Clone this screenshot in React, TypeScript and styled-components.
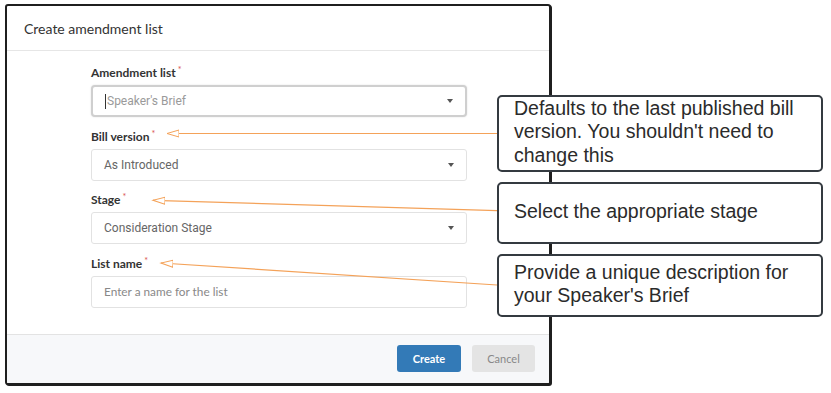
import styled, { createGlobalStyle } from "styled-components";

const GlobalStyle = createGlobalStyle`
  html, body {
    margin: 0;
    padding: 0;
    background: #ffffff;
  }
  body {
    font-family: Lato, "Open Sans", sans-serif;
  }
`;

type Field = {
  label: string;
  value: string;
  kind: "select" | "text";
  focused?: boolean;
};

const fields: Field[] = [
  { label: "Amendment list", value: "Speaker's Brief", kind: "select", focused: true },
  { label: "Bill version", value: "As Introduced", kind: "select" },
  { label: "Stage", value: "Consideration Stage", kind: "select" },
  { label: "List name", value: "Enter a name for the list", kind: "text" },
];

const notes = [
  { height: 77, text: "Defaults to the last published bill version. You shouldn't need to change this" },
  { height: 62, text: "Select the appropriate stage" },
  { height: 63, text: "Provide a unique description for your Speaker's Brief" },
];

// pointer lines: from callout edge to the label they explain
const pointers = [
  { x1: 497, y1: 133.5, x2: 167, y2: 133.5 },
  { x1: 497, y1: 210.7, x2: 153, y2: 200.3 },
  { x1: 497, y1: 285, x2: 161, y2: 263 },
];

const App = () => {
  return (
    <Page>
      <GlobalStyle />
      <Dialog>
        <Header>Create amendment list</Header>
        <Body>
          {fields.map((f) => (
            <FieldGroup key={f.label}>
              <Label>
                {f.label}
                <Req>*</Req>
              </Label>
              <Control $focused={f.focused}>
                {f.kind === "select" ? (
                  <>
                    <SelectValue $muted={f.focused}>
                      {f.focused && <TextCursor />}
                      {f.value}
                    </SelectValue>
                    <Caret />
                  </>
                ) : (
                  <Placeholder>{f.value}</Placeholder>
                )}
              </Control>
            </FieldGroup>
          ))}
        </Body>
        <Footer>
          <Button $primary>Create</Button>
          <Button>Cancel</Button>
        </Footer>
      </Dialog>

      <Pointers width="831" height="393" viewBox="0 0 831 393">
        <defs>
          <marker
            id="open-arrow"
            markerUnits="userSpaceOnUse"
            markerWidth="14"
            markerHeight="10"
            viewBox="0 -5 14 10"
            refX="12"
            refY="0"
            orient="auto"
          >
            <path d="M0,-3.5 L12,0 L0,3.5 Z" fill="#fff" stroke="#f4a259" strokeWidth="1" />
          </marker>
        </defs>
        {pointers.map((p, i) => (
          <line
            key={i}
            x1={p.x1}
            y1={p.y1}
            x2={p.x2}
            y2={p.y2}
            stroke="#f4a259"
            strokeWidth="1.2"
            markerEnd="url(#open-arrow)"
          />
        ))}
      </Pointers>

      <Callouts>
        {notes.map((n) => (
          <Callout key={n.text} $height={n.height}>
            <span>{n.text}</span>
          </Callout>
        ))}
      </Callouts>
    </Page>
  );
};

const Page = styled.div`
  position: relative;
  width: 831px;
  height: 393px;
  padding: 4px 0 0 5px;
  box-sizing: border-box;
  overflow: hidden;
`;

const Dialog = styled.div`
  display: flex;
  flex-direction: column;
  width: 546px;
  height: 381px;
  box-sizing: border-box;
  border: 2px solid #1f1f1f;
  border-radius: 3px;
  box-shadow: 1px 1px 0 #1f1f1f;
  background: #ffffff;
  overflow: hidden;
`;

const Header = styled.div`
  display: flex;
  align-items: center;
  height: 45px;
  box-sizing: border-box;
  padding: 0 17px;
  border-bottom: 1px solid #e6e6e6;
  font-size: 14px;
  color: #333;
`;

const Body = styled.div`
  flex: 1;
  padding: 13px 82px 0 84px;
`;

const FieldGroup = styled.div`
  display: flex;
  flex-direction: column;
  margin-bottom: 10.5px;
`;

const Label = styled.div`
  font-size: 12px;
  font-weight: 700;
  line-height: 18px;
  color: #333;
  margin-bottom: 3px;
`;

const Req = styled.span`
  font-size: 9px;
  font-weight: 400;
  color: #d9534f;
  vertical-align: top;
  margin-left: 2px;
  line-height: 12px;
`;

const Control = styled.div<{ $focused?: boolean }>`
  display: flex;
  align-items: center;
  justify-content: space-between;
  height: 32px;
  box-sizing: border-box;
  padding: 0 12px;
  border: ${(p) => (p.$focused ? "2px solid #cfcfcf" : "1px solid #e2e2e2")};
  border-radius: ${(p) => (p.$focused ? "4px" : "3px")};
  box-shadow: ${(p) => (p.$focused ? "0 0 2px rgba(0, 0, 0, 0.12)" : "none")};
  background: #fff;
`;

const SelectValue = styled.span<{ $muted?: boolean }>`
  display: flex;
  align-items: center;
  font-family: Roboto, "Liberation Sans", sans-serif;
  font-size: 12px;
  color: ${(p) => (p.$muted ? "#9a9a9a" : "#666")};
`;

const TextCursor = styled.i`
  display: inline-block;
  width: 1px;
  height: 15px;
  background: #333;
  margin-right: 1px;
`;

const Placeholder = styled.span`
  font-size: 11.8px;
  color: #888;
`;

const Caret = styled.i`
  width: 0;
  height: 0;
  border-left: 3px solid transparent;
  border-right: 3px solid transparent;
  border-top: 4px solid #555;
`;

const Footer = styled.div`
  display: flex;
  align-items: center;
  justify-content: flex-end;
  gap: 11px;
  height: 49px;
  box-sizing: border-box;
  padding: 0 14px 1px 0;
  border-top: 1px solid #e3e3e3;
  background: #f7f8fa;
`;

const Button = styled.button<{ $primary?: boolean }>`
  width: ${(p) => (p.$primary ? "64px" : "63px")};
  height: 27px;
  border: none;
  border-radius: 3px;
  font-family: Lato, sans-serif;
  font-size: 11px;
  font-weight: ${(p) => (p.$primary ? 700 : 400)};
  color: ${(p) => (p.$primary ? "#fff" : "#888")};
  background: ${(p) => (p.$primary ? "#337ab7" : "#e4e4e4")};
  padding: 0;
`;

const Pointers = styled.svg`
  position: absolute;
  left: 0;
  top: 0;
  pointer-events: none;
`;

const Callouts = styled.div`
  position: absolute;
  left: 497px;
  top: 95px;
  display: flex;
  flex-direction: column;
  gap: 10px;
`;

const Callout = styled.div<{ $height: number }>`
  display: flex;
  align-items: center;
  width: 326px;
  height: ${(p) => p.$height}px;
  box-sizing: border-box;
  padding: 0 10px 3px 15px;
  border: 2px solid #343a40;
  border-radius: 5px;
  background: #fff;
  font-family: "Liberation Sans", Arial, sans-serif;
  font-size: 19.5px;
  line-height: 23.5px;
  color: #2b2b2b;
`;

export default App;
